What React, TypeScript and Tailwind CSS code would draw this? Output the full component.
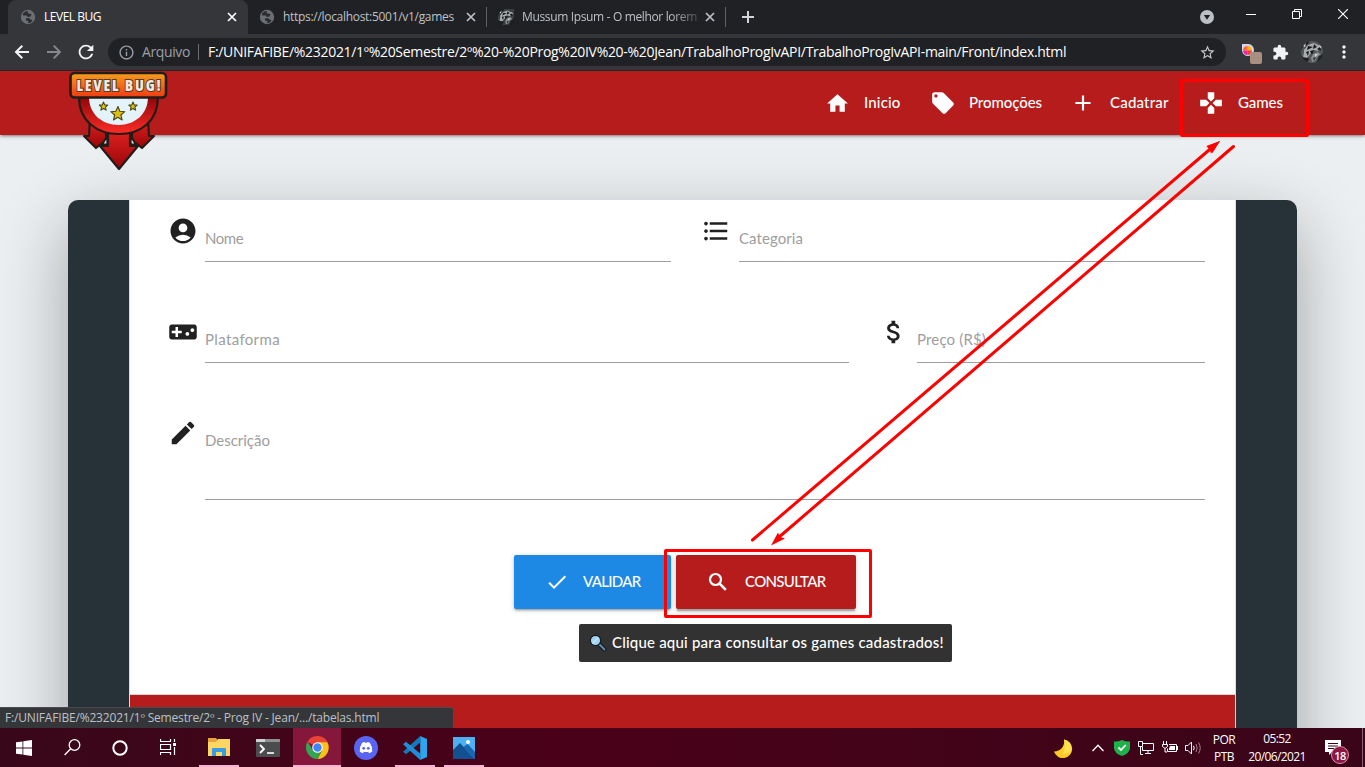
import React from 'react';
import type { ReactNode } from 'react';
import {
  MdHome, MdLocalOffer, MdAdd, MdGamepad, MdAccountCircle, MdFormatListBulleted,
  MdVideogameAsset, MdAttachMoney, MdModeEdit, MdCheck,
  MdRefresh, MdStarBorder, MdExtension, MdMoreVert, MdInfoOutline,
} from 'react-icons/md';

function Globe() {
  return (
    <svg width="16" height="16" viewBox="0 0 16 16" className="shrink-0">
      <circle cx="8" cy="8" r="7.200" fill="#6b6f74" />
      <path d="M3 4.500q2-2.800 5-2.500-1 2 .5 2.500l3 .5-1 2.500-3 .5-.5-1.500H3zM6 9.500l3-.5 1.500 1.500 2 .5-1.500 2.500-3 .8.5-2.300L6 11.500z" fill="#2b2c30" />
    </svg>
  );
}

function TabClose() {
  return (
    <svg width="14" height="14" viewBox="0 0 14 14" className="shrink-0">
      <path d="M3 3l8 8M11 3l-8 8" stroke="currentColor" strokeWidth="1.700" />
    </svg>
  );
}

function PhotoThumb({ size, round }: { size: number; round?: boolean }) {
  return (
    <svg width={size} height={size} viewBox="0 0 22 22" className={round ? 'shrink-0 rounded-full' : 'shrink-0'}>
      <rect width="22" height="22" fill={round ? '#55585b' : '#3c3f42'} />
      <path d="M0 0h9l-3 4-4 2-2 4zM22 12l-4 4-3 6h7zM0 16l5-2 3 4-2 4H0z" fill="#1c1e20" />
      <path d="M3 9l4-5 6-2 6 3-2 5-4-1-3 3-4 5-4-1 1-4z" fill="#a9acaf" />
      <path d="M7 5l5 1-6 3zM13 3l3 3-4 2zM9 10l4-1-2 5zM5 11l3-1-1 5zM16 8l3-2 1 4z" fill="#17191b" />
      <path d="M12 13l5-2 3 3-4 2-2 4-3 1-1-4z" fill="#8b8e91" />
      <path d="M14 13l3 0-3 3zM18 4l3 2-2 1zM2 5l3-3-1 4z" fill="#d4d6d8" />
      <path d="M12 17l3-1-2 4zM17 15l3-1-2 3z" fill="#2a2c2e" />
    </svg>
  );
}

function TabStrip() {
  return (
    <div className="flex h-[34px] shrink-0 items-start bg-[#202124] text-xs text-[#bdc1c6]">
      <div className="ml-2 flex h-[34px] w-60 shrink-0 items-center rounded-t-lg bg-[#35363a] pl-3 pr-[9px] text-white">
        <Globe />
        <span className="ml-2 flex-1 whitespace-nowrap tracking-[-0.48px]">LEVEL BUG</span>
        <TabClose />
      </div>
      <div className="flex h-[34px] w-[238px] shrink-0 items-center pl-[11px] pr-2">
        <Globe />
        <span className="ml-2 flex-1 whitespace-nowrap tracking-[-0.3px]">https://localhost:5001/v1/games</span>
        <TabClose />
      </div>
      <div className="mt-[7px] h-5 w-px shrink-0 bg-[#5f6368]" />
      <div className="flex h-[34px] w-[238px] shrink-0 items-center pl-[11px] pr-2">
        <PhotoThumb size={16} />
        <span className="ml-2 w-[181px] overflow-hidden whitespace-nowrap tracking-[-0.35px] [mask-image:linear-gradient(to_right,black_150px,transparent_184px)]">
          Mussum Ipsum - O melhor lorem
        </span>
        <TabClose />
      </div>
      <div className="mt-[7px] h-5 w-px shrink-0 bg-[#5f6368]" />
      <svg width="12" height="12" viewBox="0 0 12 12" className="ml-[16px] mt-[11px]">
        <path d="M6 0v12M0 6h12" stroke="#d0d3d7" strokeWidth="2" />
      </svg>
      <div className="flex-1" />
      <svg width="14" height="14" viewBox="0 0 14 14" className="mt-[10px]">
        <circle cx="7" cy="7" r="7" fill="#bdc1c6" />
        <path d="M3.800 5h6.400L7 9.800z" fill="#202124" />
      </svg>
      <svg width="10" height="10" viewBox="0 0 10 10" className="ml-[32px] mt-[9px]">
        <path d="M0 5.500h10" stroke="#fff" />
      </svg>
      <svg width="10" height="10" viewBox="0 0 10 10" className="ml-[36px] mt-[9px]">
        <path d="M.5 2.500h7v7h-7zM2.500 2V.5h7v7H8" stroke="#fff" fill="none" />
      </svg>
      <svg width="10" height="10" viewBox="0 0 10 10" className="ml-[36px] mr-[17px] mt-[9px]">
        <path d="M0 0l10 10M10 0L0 10" stroke="#fff" strokeWidth="1.100" />
      </svg>
    </div>
  );
}

function Toolbar() {
  return (
    <div className="flex h-[37px] shrink-0 items-center border-b border-[#242528] bg-[#35363a] pl-3">
      <svg width="20" height="20" viewBox="0 0 20 20" className="text-[#f1f3f4]">
        <path d="M17 10H4.500M10.300 3.700L4 10l6.300 6.300" fill="none" stroke="currentColor" strokeWidth="2" />
      </svg>
      <svg width="20" height="20" viewBox="0 0 20 20" className="ml-3 text-[#85888c]">
        <path d="M3 10h12.500M9.700 3.700L16 10l-6.300 6.300" fill="none" stroke="currentColor" strokeWidth="1.900" />
      </svg>
      <MdRefresh size={22} className="ml-[11px] text-[#f1f3f4]" />
      <div className="ml-[11px] flex h-7 w-[1118px] items-center rounded-full bg-[#202124] pl-[10px] pr-[10px] text-sm">
        <MdInfoOutline size={17} className="shrink-0 text-[#9aa0a6]" />
        <span className="ml-[7px] tracking-[-0.38px] text-[#9aa0a6]">Arquivo</span>
        <span className="ml-2 mr-[9px] h-4 w-px bg-[#6a6d71]" />
        <span className="flex-1 whitespace-nowrap tracking-[-0.31px] text-white">
          F:/UNIFAFIBE/%232021/1º%20Semestre/2º%20-%20Prog%20IV%20-%20Jean/TrabalhoProgIvAPI/TrabalhoProgIvAPI-main/Front/index.html
        </span>
        <MdStarBorder size={17} className="shrink-0 text-[#c4c7cb]" />
      </div>
      <svg width="21" height="21" viewBox="0 0 21 21" className="ml-[15px] mt-[4px]">
        <path d="M1 0h6.500a6 6 0 1 1-6.500 6.500z" fill="#d6d3ec" />
        <path d="M6.500 2a4.500 4.500 0 0 1 4.500 4.500H6.500z" fill="#ffb400" />
        <path d="M11 6.500A4.500 4.500 0 0 1 6.500 11V6.500z" fill="#ff3d2e" />
        <path d="M6.500 11A4.500 4.500 0 0 1 2 6.500h4.500z" fill="#ef1fb0" />
        <path d="M2 6.500A4.500 4.500 0 0 1 6.500 2v4.500z" fill="#f96a2a" />
        <rect x="9" y="8" width="12" height="12" rx="2" fill="#a98f82" />
      </svg>
      <MdExtension size={17} className="ml-[10px] text-[#f1f3f4]" />
      <div className="ml-[12px]"><PhotoThumb size={22} round /></div>
      <MdMoreVert size={20} className="ml-[11px] text-[#f1f3f4]" />
    </div>
  );
}

function Logo() {
  return (
    <svg width="100" height="102" viewBox="0 0 100 102" className="block">
      <defs>
        <linearGradient id="banner" x1="0" y1="0" x2="0" y2="1">
          <stop offset="0" stopColor="#f5a01c" />
          <stop offset="1" stopColor="#f03a12" />
        </linearGradient>
        <linearGradient id="ring" x1="0" y1="0" x2="0" y2="1">
          <stop offset="0" stopColor="#8e0508" />
          <stop offset="1" stopColor="#ff2d28" />
        </linearGradient>
        <linearGradient id="arrow" x1="0" y1="0" x2="0" y2="1">
          <stop offset="0" stopColor="#e52222" />
          <stop offset="1" stopColor="#960508" />
        </linearGradient>
      </defs>
      <g stroke="#241c18" strokeWidth="2.200" strokeLinejoin="round">
        <path d="M21 48h16v18h4L27 77 15 65h5z" fill="url(#arrow)" />
        <path d="M79 48H63v18h-4L73 77 85 65h-5z" fill="url(#arrow)" />
        <path d="M33 73.500l5.500-9v9zM67 73.500l-5.500-9v9z" fill="#dde3e6" />
        <path d="M39 58h22v17h8L50 98 31 75h8z" fill="url(#arrow)" />
        <path d="M10 26C10 50 28 63 50 63S89 50 89 26z" fill="url(#ring)" />
      </g>
      <path d="M20 26C20 43 33 54 49.500 54S79 43 79 26z" fill="#e4f2fa" />
      <rect x="1.500" y="2" width="95.500" height="24.500" rx="4" fill="url(#banner)" stroke="#241c18" strokeWidth="2.600" />
      <text
        x="49.500" y="19.500" textAnchor="middle" textLength="84" lengthAdjust="spacing"
        fontSize="15" fontWeight="800" className="font-['Open_Sans',sans-serif] [font-stretch:75%]"
        fill="#f0e9e2" stroke="#5a3a2c" strokeWidth="2" paintOrder="stroke"
      >
        LEVEL BUG!
      </text>
      <g fill="#d9c014" stroke="#4b4514" strokeWidth="1.100" strokeLinejoin="round">
        <path d="M49 35.500l1.800 4.800 5 .4-3.900 3.300 1.200 5-4.300-2.700-4.300 2.700 1.200-5-3.900-3.300 5-.4z" />
        <path d="M34.500 31l1.200 2.900 3 .2-2.300 2 .7 3-2.600-1.600-2.600 1.600.7-3-2.300-2 3-.2z" />
        <path d="M64 31l1.200 2.900 3 .2-2.300 2 .7 3-2.600-1.600-2.600 1.600.7-3-2.300-2 3-.2z" />
      </g>
    </svg>
  );
}

function NavBar() {
  return (
    <header className="relative z-10 flex h-16 shrink-0 items-start bg-[#b71c1c] pl-[69px] text-[15px] font-medium text-white shadow-[0_2px_2px_0_rgba(0,0,0,0.14),0_3px_1px_-2px_rgba(0,0,0,0.12),0_1px_5px_0_rgba(0,0,0,0.2)]">
      <div className="h-16 w-[756px]"><Logo /></div>
      <nav className="flex h-16 items-center">
        <div className="flex w-[106px] items-center">
          <MdHome size={25} />
          <span className="ml-[14px] pb-[2px] tracking-[0.15px]">Inicio</span>
        </div>
        <div className="flex w-[139px] items-center">
          <MdLocalOffer size={26} className="-ml-[1px]" />
          <span className="ml-[13px] pb-[2px] tracking-[-0.08px]">Promoções</span>
        </div>
        <div className="flex w-[128px] items-center">
          <MdAdd size={26} />
          <span className="ml-[14px] pb-[2px] tracking-[0.2px]">Cadatrar</span>
        </div>
        <div className="flex items-center">
          <MdGamepad size={26} />
          <span className="ml-[14px] pb-[2px] tracking-[-0.06px]">Games</span>
        </div>
      </nav>
    </header>
  );
}

function Field({ icon, children, width, height, iconWidth = 'w-[37px]' }: { icon: ReactNode; children: ReactNode; width: string; height: string; iconWidth?: string }) {
  return (
    <div className="flex items-start">
      <div className={`text-[#212121] ${iconWidth}`}>{icon}</div>
      <div className={`border-b border-[#9e9e9e] pt-[12px] leading-5 text-[#9e9e9e] ${width} ${height}`}>{children}</div>
    </div>
  );
}

function GameForm() {
  return (
    <div className="flex h-[494px] flex-col pl-[38px] pt-4">
      <div className="flex gap-[30px]">
        <Field icon={<MdAccountCircle size={30} />} width="w-[466px]" height="h-[46px]">
          <span className="tracking-[-0.45px]">Nome</span>
        </Field>
        <Field icon={<MdFormatListBulleted size={30} />} width="w-[466px]" height="h-[46px]" iconWidth="w-[38px]">
          <span className="tracking-[0.07px]">Categoria</span>
        </Field>
      </div>
      <div className="mt-[55px] flex gap-[30px]">
        <Field icon={<MdVideogameAsset size={30} />} width="w-[644px]" height="h-[46px]">
          <span className="tracking-[0.36px]">Plataforma</span>
        </Field>
        <Field icon={<MdAttachMoney size={30} />} width="w-[288px]" height="h-[46px]" iconWidth="w-[38px]">
          <span className="tracking-[0.16px]">Preço (R$)</span>
        </Field>
      </div>
      <div className="mt-[55px] flex">
        <Field icon={<MdModeEdit size={30} />} width="w-[1000px]" height="h-[82px]">
          <span className="tracking-[-0.02px]">Descrição</span>
        </Field>
      </div>
      <div className="-ml-[38px] mt-[55px] flex gap-[5px] pl-[384px] text-white">
        <button className="flex h-[54px] w-[157px] items-center rounded-[2px] bg-[#1e88e5] pl-[31px] shadow-[0_2px_2px_0_rgba(0,0,0,0.14),0_3px_1px_-2px_rgba(0,0,0,0.12),0_1px_5px_0_rgba(0,0,0,0.2)]">
          <MdCheck size={24} />
          <span className="ml-[14px] pb-[2px] font-medium tracking-[-0.7px]">VALIDAR</span>
        </button>
        <button className="flex h-[54px] w-[180px] items-center rounded-[2px] bg-[#b71c1c] pl-[30px] shadow-[0_3px_3px_0_rgba(0,0,0,0.14),0_1px_7px_0_rgba(0,0,0,0.12),0_3px_1px_-1px_rgba(0,0,0,0.2)]">
          <svg width="24" height="24" viewBox="0 0 24 24">
            <circle cx="9.500" cy="9.500" r="5.500" fill="none" stroke="currentColor" strokeWidth="2.200" />
            <path d="M13.500 13.500l6.300 6.300" stroke="currentColor" strokeWidth="2.500" />
          </svg>
          <span className="ml-[15px] pb-[2px] font-medium tracking-[-0.65px]">CONSULTAR</span>
        </button>
      </div>
      <div className="-ml-[38px] mt-[15px] pl-[449px]">
        <div className="flex h-[38px] w-[373px] items-center rounded-[2px] bg-[#323232] pl-[10px] text-white">
          <svg width="18" height="18" viewBox="0 0 18 18">
            <path d="M10.500 10.500l5 5" stroke="#15191c" strokeWidth="4" strokeLinecap="round" />
            <path d="M10.500 10.500l5 5" stroke="#5c91b5" strokeWidth="1.800" strokeLinecap="round" />
            <circle cx="6.500" cy="6.500" r="5.200" fill="#9dd3f5" stroke="#15191c" strokeWidth="1.200" />
            <path d="M3.500 9.500l6-6" stroke="#c8e8fb" strokeWidth="1.500" />
          </svg>
          <span className="ml-[5px] whitespace-nowrap pb-[2px] font-medium tracking-[0.2px]">Clique aqui para consultar os games cadastrados!</span>
        </div>
      </div>
    </div>
  );
}

function Page() {
  return (
    <div className="flex h-[657px] flex-col overflow-hidden bg-[#eceff1] font-['Lato',sans-serif] text-[15px]">
      <NavBar />
      <main className="ml-[68px] mt-[65px] flex h-[700px] w-[1229px] shrink-0 justify-center rounded-[10px] bg-[#263238] shadow-[0_24px_70px_0_rgba(0,0,0,0.33)]">
        <section className="flex w-[1107px] flex-col border-x border-[#dcdfe1] bg-white">
          <GameForm />
          <footer className="flex-1 border-t border-[#d5d5d5] bg-[#b71c1c]" />
        </section>
      </main>
    </div>
  );
}

function TaskCell({ children, className = '' }: { children: ReactNode; className?: string }) {
  return <div className={`flex h-full w-12 items-center justify-center border-b-2 ${className || 'border-transparent'}`}>{children}</div>;
}

function OpenCell({ children }: { children: ReactNode }) {
  return (
    <div className="flex h-full w-[49px] justify-center">
      <div className="flex w-10 items-center justify-center border-b-2 border-[#f5b5d2]">{children}</div>
    </div>
  );
}

function TaskBar() {
  return (
    <div className="flex h-[39px] items-stretch bg-linear-to-r from-[#380719] via-[#4a0019] via-40% to-[#3a0518] text-xs text-white">
      <TaskCell>
        <svg width="16" height="16" viewBox="0 0 16 16" className="mt-[2px]">
          <path d="M0 2.300L6.500 1.400v6.200H0zM7.300 1.300L16 0v7.600H7.300zM0 8.400h6.500v6.200L0 13.700zM7.300 8.400H16V16l-8.700-1.300z" fill="#fff" />
        </svg>
      </TaskCell>
      <TaskCell>
        <svg width="17" height="17" viewBox="0 0 17 17" className="mt-[2px]">
          <circle cx="10.500" cy="6" r="5.300" fill="none" stroke="#fff" strokeWidth="1.300" />
          <path d="M6.700 9.800L.6 16" stroke="#fff" strokeWidth="1.300" />
        </svg>
      </TaskCell>
      <TaskCell>
        <svg width="16" height="16" viewBox="0 0 16 16" className="mt-[2px]">
          <circle cx="8" cy="8" r="6.700" fill="none" stroke="#fff" strokeWidth="2" />
        </svg>
      </TaskCell>
      <TaskCell>
        <svg width="16" height="16" viewBox="0 0 16 16">
          <path d="M.5 0v2.500h10V0M.5 16v-2.500h10V16M.5 5.500h10v5H.5zM14.500 0v3M14.500 8v8" fill="none" stroke="#fff" strokeWidth="1.200" />
          <path d="M13 4h3v3h-3z" fill="#fff" />
        </svg>
      </TaskCell>
      <div className="ml-[2px] flex">
        <OpenCell>
          <svg width="22" height="18" viewBox="0 0 22 18">
            <path d="M0 0h8l2 2.500V7H0z" fill="#e8a33d" />
            <path d="M0 4h8l2-3h12v17H0z" fill="#fdd663" />
            <path d="M4 18v-7q0-1 1-1h12q1 0 1 1v7h-4v-4H8v4z" fill="#3a9be0" />
          </svg>
        </OpenCell>
      </div>
      <TaskCell className="ml-[1px] border-transparent">
        <svg width="24" height="18" viewBox="0 0 24 18" className="mt-[2px]">
          <rect width="24" height="18" rx="1" fill="#4a4c4e" />
          <path d="M0 3V1q0-1 1-1h22q1 0 1 1v2z" fill="#8e9092" />
          <path d="M0 3V1q0-1 1-1h8v3z" fill="#d0d1d2" />
          <path d="M4 6l4 4-4 4" fill="none" stroke="#fff" strokeWidth="1.800" />
          <path d="M11 14h7" stroke="#fff" strokeWidth="1.600" />
        </svg>
      </TaskCell>
      <TaskCell className="ml-[1px] border-[#f5b5d2] bg-[#85173d]">
        <svg width="23" height="23" viewBox="0 0 48 48" className="mt-[2px]">
          <path d="M24 24L3.200 12A24 24 0 0 1 44.800 12z" fill="#e94335" />
          <path d="M33.500 29.500L24 48A24 24 0 0 0 44.800 13H24z" fill="#fbc116" />
          <path d="M14.500 29.500L3.200 12A24 24 0 0 0 24 48l9.500-18.500z" fill="#34a353" />
          <circle cx="24" cy="24" r="11" fill="#fff" />
          <circle cx="24" cy="24" r="8.800" fill="#4285f4" />
        </svg>
      </TaskCell>
      <TaskCell className="ml-[1px] border-transparent">
        <svg width="24" height="24" viewBox="0 0 24 24" className="mt-[2px]">
          <circle cx="12" cy="12" r="12" fill="#5865f2" />
          <path d="M8.200 6.800q1.300-.6 2.500-.8l.4.8h1.800l.4-.8q1.200.2 2.500.8 3 4.300 2.500 8.700-1.400 1.200-3.200 1.700l-.8-1.300q.6-.2 1-.5-3.300 1.400-6.600 0 .4.300 1 .5l-.8 1.300q-1.800-.5-3.200-1.700-.5-4.400 2.500-8.700z" fill="#fff" />
          <circle cx="9.700" cy="12.300" r="1.400" fill="#5865f2" />
          <circle cx="14.300" cy="12.300" r="1.400" fill="#5865f2" />
        </svg>
      </TaskCell>
      <OpenCell>
        <svg width="24" height="24" viewBox="0 0 24 24" className="mt-[2px]">
          <path d="M17.200 0L24 3v18l-6.800 3z" fill="#2ba5ee" />
          <path d="M17.200 0v6.500L3 18.200 0 15.700z" fill="#1379bd" />
          <path d="M17.200 24v-6.500L3 5.800 0 8.300z" fill="#1d8fd8" />
        </svg>
      </OpenCell>
      <OpenCell>
        <svg width="22" height="22" viewBox="0 0 22 22" className="mt-[2px]">
          <rect width="22" height="22" fill="#4cb0f2" />
          <path d="M0 13l7-7 14.500 16H0z" fill="#12508f" />
          <path d="M10.500 10l4-3 7.500 8v7h-1z" fill="#1b66ae" />
          <circle cx="15" cy="5" r="2" fill="#fff" />
        </svg>
      </OpenCell>
      <div className="flex-1" />
      <div className="-ml-px flex items-center">
        <svg width="20" height="20" viewBox="0 0 20 20" className="mr-[19px]">
          <path d="M11 1.500A9.300 9.300 0 1 1 1 13.500 10 10 0 0 0 11 1.500z" fill="#ffc928" />
          <path d="M11 1.500A9.300 9.300 0 0 1 18.500 12Q16 16 10 16 13 8 11 1.500z" fill="#ffe04d" />
        </svg>
        <svg width="12" height="8" viewBox="0 0 12 8" className="mr-[10px]">
          <path d="M.5 7L6 1.200 11.500 7" fill="none" stroke="#fff" strokeWidth="1.300" />
        </svg>
        <svg width="16" height="16" viewBox="0 0 16 16" className="mr-[8px]">
          <path d="M0 1.500Q4 2 8 0q4 2 8 1.500V8q0 5-8 8-8-3-8-8z" fill="#1fb14c" />
          <path d="M4.500 7.500L7 10l4.800-5" fill="none" stroke="#fff" strokeWidth="1.800" />
        </svg>
        <svg width="16" height="14" viewBox="0 0 16 14" className="mr-[8px]">
          <path d="M5 2.500h10.500v7H4.500V6M7 12.500h6M10 9.500v3M.5.5h4v5h-4zM2.500 6v7.500H5" fill="none" stroke="#fff" />
        </svg>
        <svg width="16" height="13" viewBox="0 0 16 13" className="mr-[7px]">
          <path d="M1.500 0v3M4.500 0v3M.5 3.500h5v2L3 7.500.5 5.500zM3 7.500V11h2" fill="none" stroke="#fff" />
          <path d="M5.500 10.500v-3M7 3.500h7.500v7h-9M15.500 5v4" fill="none" stroke="#fff" />
          <path d="M8 5h5v4H7V8z" fill="#fff" />
        </svg>
        <svg width="17" height="14" viewBox="0 0 17 14" className="mr-[10px]">
          <path d="M.5 4.500h2.500l3.500-3.500v12L3 9.500H.5z" fill="none" stroke="#fff" />
          <path d="M8.500 4.800q1.400 2.200 0 4.400" fill="none" stroke="#fff" />
          <path d="M11 3q2.400 4 0 8M13.500 1.500q3.400 5.500 0 11" fill="none" stroke="#a5808d" />
        </svg>
        <div className="flex w-[24px] flex-col items-center leading-[17px] tracking-[-0.5px]">
          <span>POR</span>
          <span>PTB</span>
        </div>
        <div className="ml-[11px] flex w-[60px] flex-col items-center whitespace-nowrap leading-[18px] tracking-[-0.6px]">
          <span>05:52</span>
          <span>20/06/2021</span>
        </div>
      </div>
      <div className="relative ml-[18px] w-[37px] pt-[12px]">
        <svg width="16" height="15" viewBox="0 0 16 15">
          <path d="M0 0h16v12H7l-3 3v-3H0z" fill="#fff" />
          <path d="M3 3.500h10M3 6h10M3 8.500h6" stroke="#3a0518" />
        </svg>
        <span className="absolute left-[6px] top-[18px] flex h-[18px] w-[18px] items-center justify-center rounded-full border border-[#d98ba9] bg-[#8d1744] text-[11px] font-semibold leading-none tracking-[-0.5px]">18</span>
      </div>
      <div className="mr-[2px] w-px bg-[#84606c]" />
    </div>
  );
}

function Annotations() {
  return (
    <>
      <div className="absolute left-[1180px] top-[79px] z-20 h-[58px] w-[129px] rounded-[2px] border-[3px] border-[#ff0000]" />
      <div className="absolute left-[664px] top-[549px] z-20 h-[69px] w-[208px] rounded-[2px] border-[3px] border-[#ff0000]" />
      <svg width="520" height="420" viewBox="740 135 520 420" className="absolute left-[740px] top-[135px] z-20">
        <g stroke="#ff0000" strokeWidth="3" strokeLinecap="round">
          <path d="M752.500 540L1212 147.500" />
          <path d="M1233.500 146.500L778 538" />
        </g>
        <path d="M1220 141l-7.500 12-4-5-2-2z" fill="#ff0000" />
        <path d="M1220 141l-13.500 5.500 3 2.500 1.500 4.500z" fill="#ff0000" />
        <path d="M771 545.500l7-13 2 4.500 5 1.500z" fill="#ff0000" />
      </svg>
    </>
  );
}

export default function App() {
  return (
    <div className="relative flex h-[767px] w-[1365px] flex-col overflow-hidden bg-[#202124] font-['Open_Sans','Noto_Sans',sans-serif]">
      <TabStrip />
      <Toolbar />
      <Page />
      <TaskBar />
      <div className="absolute left-0 top-[707px] z-20 flex h-[21px] w-[454px] items-center rounded-tr border-r border-t border-[#4a4b4f] bg-[#35363a] pl-[5px] text-xs tracking-[-0.18px] text-[#bdc1c6]">
        <span className="whitespace-nowrap">F:/UNIFAFIBE/%232021/1º Semestre/2º - Prog IV - Jean/.../tabelas.html</span>
      </div>
      <Annotations />
    </div>
  );
}
